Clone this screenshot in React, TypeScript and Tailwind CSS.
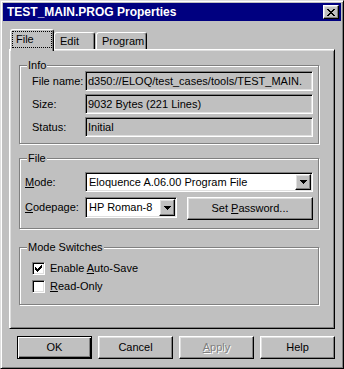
import type { ReactNode } from 'react';

const CLOSE_X = ['11000011', '01100110', '00111100', '00011000', '00111100', '01100110', '11000011'];
const CHECK = ['0000001', '0000011', '1000111', '1101110', '1111100', '0111000', '0010000'];
const ARROW = ['1111111', '0111110', '0011100', '0001000'];

function PixelIcon({ rows, className }: { rows: string[]; className?: string }) {
  const w = rows[0].length;
  const h = rows.length;
  return (
    <svg width={w} height={h} viewBox={`0 0 ${w} ${h}`} shapeRendering="crispEdges" className={className}>
      {rows.flatMap((row, y) =>
        row.split('').map((c, x) =>
          c === '1' ? <rect key={`${x}-${y}`} x={x} y={y} width={1} height={1} fill="currentColor" /> : null
        )
      )}
    </svg>
  );
}

const raised =
  'border border-t-white border-l-white border-r-black border-b-black bg-[#c0c0c0] shadow-[inset_-1px_-1px_#808080,inset_1px_1px_#dfdfdf]';
const sunken =
  'border border-t-[#808080] border-l-[#808080] border-r-white border-b-white shadow-[inset_1px_1px_#000,inset_-1px_-1px_#dfdfdf]';

function Group({ title, className, children }: { title: string; className?: string; children: ReactNode }) {
  return (
    <fieldset
      className={`w-[300px] border border-[#808080] shadow-[1px_1px_0_#fff,inset_1px_1px_0_#fff] ${className ?? ''}`}
    >
      <legend className="ml-[7px] px-[1px] leading-[12px] bg-[#c0c0c0]">{title}</legend>
      {children}
    </fieldset>
  );
}

function ReadOnlyField({ label, value }: { label: string; value: string }) {
  return (
    <div className="flex h-[20px] items-center">
      <span className="w-[53px]">{label}</span>
      <div className={`${sunken} flex h-[20px] w-[228px] items-center overflow-hidden whitespace-nowrap pl-[2px]`}>
        {value}
      </div>
    </div>
  );
}

function Combo({ value, width, height }: { value: string; width: string; height: string }) {
  return (
    <div className={`${sunken} ${width} ${height} flex items-stretch bg-white p-[1px]`}>
      <span className="flex flex-1 items-center pl-[2px] whitespace-nowrap">{value}</span>
      <div className={`${raised} flex w-[16px] items-center justify-center`}>
        <PixelIcon rows={ARROW} />
      </div>
    </div>
  );
}

function Checkbox({ checked, children }: { checked: boolean; children: ReactNode }) {
  return (
    <div className="flex h-[18px] items-center gap-[5px]">
      <div className={`${sunken} flex h-[13px] w-[13px] items-center justify-center bg-white`}>
        {checked ? <PixelIcon rows={CHECK} /> : null}
      </div>
      <span>{children}</span>
    </div>
  );
}

function Button({ children, isDefault, disabled }: { children: ReactNode; isDefault?: boolean; disabled?: boolean }) {
  const frame = isDefault
    ? 'border border-black bg-[#c0c0c0] shadow-[inset_1px_1px_#fff,inset_-1px_-1px_#000,inset_-2px_-2px_#808080]'
    : raised;
  return (
    <button
      type="button"
      className={`${frame} flex h-[23px] w-[75px] items-center justify-center ${
        disabled ? 'text-[#808080] [text-shadow:1px_1px_0_#fff]' : ''
      }`}
    >
      {children}
    </button>
  );
}

export default function App() {
  return (
    <div className="flex h-[369px] w-[344px] flex-col border border-t-[#dfdfdf] border-l-[#dfdfdf] border-r-black border-b-black bg-[#c0c0c0] p-[2px] font-['Liberation_Sans',Arial,sans-serif] text-[11px] leading-[13px] text-black shadow-[inset_1px_1px_#fff,inset_-1px_-1px_#808080]">
      <div className="flex h-[18px] items-center justify-between bg-[#000080] pl-[4px] pr-[2px]">
        <span className="text-[12px] font-bold text-white">TEST_MAIN.PROG Properties</span>
        <div className={`${raised} flex h-[14px] w-[16px] items-center justify-center`}>
          <PixelIcon rows={CLOSE_X} />
        </div>
      </div>

      <div className="mt-[8px] pl-[6px]">
        <div className="flex h-[20px] items-end">
          <div className="relative z-10 mb-[-2px] ml-[1px] h-[22px] w-[44px] rounded-t-[3px] border-t border-l border-r border-t-white border-l-white border-r-black bg-[#c0c0c0] px-[1px] pt-[1px] shadow-[inset_-1px_0_#808080]">
            <div className="flex h-[17px] items-center border border-dotted border-black pl-[3px]">File</div>
          </div>
          <div className="flex h-[17px] w-[41px] items-center rounded-t-[3px] border-t border-l border-r border-t-white border-l-white border-r-black pl-[5px] shadow-[inset_-1px_0_#808080]">
            Edit
          </div>
          <div className="ml-[1px] flex h-[17px] w-[51px] items-center rounded-t-[3px] border-t border-l border-r border-t-white border-l-white border-r-black pl-[5px] shadow-[inset_-1px_0_#808080]">
            Program
          </div>
        </div>

        <div className="flex h-[280px] w-[326px] flex-col border border-t-white border-l-white border-r-black border-b-black pl-[9px] pt-[9px] shadow-[inset_1px_1px_#dfdfdf,inset_-1px_-1px_#808080]">
          <Group title="Info">
            <div className="flex flex-col gap-[3px] pb-[6px] pl-[12px]">
              <ReadOnlyField label="File name:" value="d350://ELOQ/test_cases/tools/TEST_MAIN." />
              <ReadOnlyField label="Size:" value="9032 Bytes (221 Lines)" />
              <ReadOnlyField label="Status:" value="Initial" />
            </div>
          </Group>

          <Group title="File" className="mt-[8px]">
            <div className="flex flex-col pb-[8px] pl-[5px] pt-[8px]">
              <div className="flex items-center">
                <span className="w-[60px]">
                  <span className="underline">M</span>ode:
                </span>
                <Combo value="Eloquence A.06.00 Program File" width="w-[228px]" height="h-[20px]" />
              </div>
              <div className="mt-[5px] flex items-start">
                <span className="flex h-[21px] w-[60px] items-center">
                  <span>
                    <span className="underline">C</span>odepage:
                  </span>
                </span>
                <Combo value="HP Roman-8" width="w-[92px]" height="h-[21px]" />
                <div className="ml-[10px]">
                  <button type="button" className={`${raised} flex h-[23px] w-[126px] items-center justify-center`}>
                    <span>
                      Set <span className="underline">P</span>assword...
                    </span>
                  </button>
                </div>
              </div>
            </div>
          </Group>

          <Group title="Mode Switches" className="mt-[12px]">
            <div className="flex flex-col pb-[9px] pl-[12px] pt-[6px]">
              <Checkbox checked>
                Enable <span className="underline">A</span>uto-Save
              </Checkbox>
              <Checkbox checked={false}>
                <span className="underline">R</span>ead-Only
              </Checkbox>
            </div>
          </Group>
        </div>
      </div>

      <div className="mt-[7px] flex gap-[6px] pl-[14px]">
        <Button isDefault>OK</Button>
        <Button>Cancel</Button>
        <Button disabled>
          <span>
            <span className="underline">A</span>pply
          </span>
        </Button>
        <Button>Help</Button>
      </div>
    </div>
  );
}
